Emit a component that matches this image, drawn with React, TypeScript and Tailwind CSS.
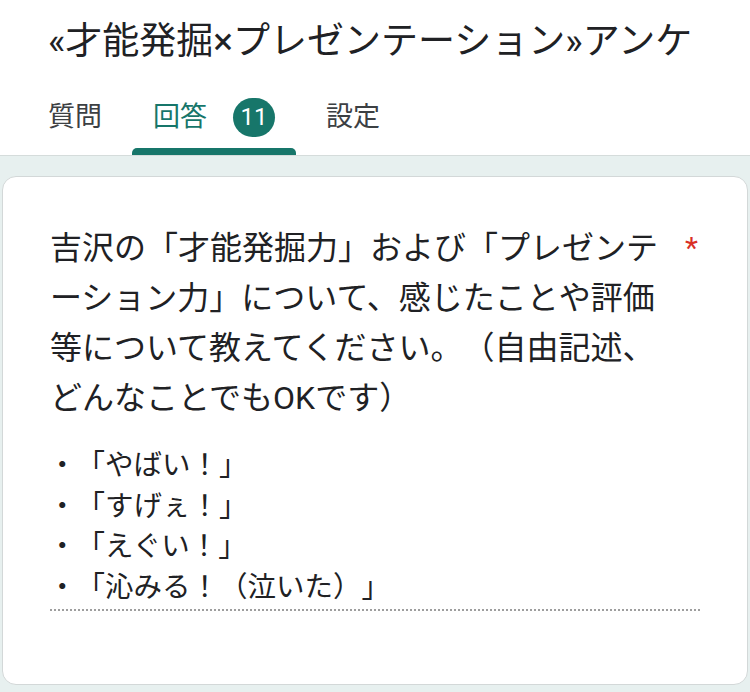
const font = { fontFamily: 'Roboto, "Noto Sans CJK JP", sans-serif' };

const answers = ["・「やばい！」", "・「すげぇ！」", "・「えぐい！」", "・「沁みる！（泣いた）」"];

function Tab({ label, active, badge }: { label: string; active?: boolean; badge?: string }) {
  return (
    <div className="flex flex-col">
      <div className="flex h-[40px] items-center gap-[26px] px-[21px]">
        <span className={active ? "text-[27px] text-[#17766a]" : "text-[27px] text-[#3c4043]"}>{label}</span>
        {badge && (
          <span className="flex h-[39px] w-[42px] items-center justify-center rounded-full bg-[#17766a] text-[24px] text-white">
            {badge}
          </span>
        )}
      </div>
      <div className={active ? "mt-[11px] h-[7px] rounded-t-[5px] bg-[#17766a]" : "mt-[11px] h-[7px]"} />
    </div>
  );
}

export default function App() {
  return (
    <div
      className="flex h-[692px] w-[750px] flex-col overflow-hidden bg-[#e7f0ef] text-[#202124] [text-spacing-trim:space-all]"
      style={font}
    >
      <header className="bg-white">
        <div className="pl-[48px] pt-[20px]">
          <h1 className="whitespace-nowrap text-[37px] font-normal leading-[44px]">«才能発掘×プレゼンテーション»アンケ</h1>
        </div>
        <nav className="mt-[33px] flex gap-[9px] pl-[27px]">
          <Tab label="質問" />
          <Tab label="回答" active badge="11" />
          <Tab label="設定" />
        </nav>
      </header>
      <div className="h-px bg-[#d5dcdb]" />
      <main className="px-[2px] pt-[20px]">
        <section className="rounded-[14px] border border-[#d3d8d8] bg-white px-[47px] pb-[73px] pt-[46px]">
          <div className="flex justify-between">
            <p className="w-[616px] text-[32px] leading-[50px]">
              吉沢の「才能発掘力」および「プレゼンテーション力」について、感じたことや評価等について教えてください。（自由記述、どんなことでもOKです）
            </p>
            <span className="pr-[2px] text-[30px] leading-[50px] text-[#d93025]">*</span>
          </div>
          <div className="mt-[23px] border-b-2 border-dotted border-[#9e9e9e] pb-px">
            {answers.map((a) => (
              <div key={a} className="-ml-[2px] text-[28.5px] leading-[40.5px]">
                {a}
              </div>
            ))}
          </div>
        </section>
      </main>
    </div>
  );
}
